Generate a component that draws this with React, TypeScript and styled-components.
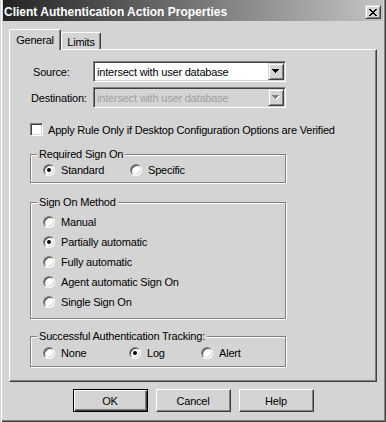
import React from "react";
import styled, { createGlobalStyle } from "styled-components";

const FACE = "#d4d4d4";

const Global = createGlobalStyle`
  html, body { margin: 0; padding: 0; background: ${FACE}; }
  body { font-family: "Liberation Sans", Arial, sans-serif; font-size: 11px; letter-spacing: -0.2px; color: #000; }
  * { box-sizing: border-box; }
`;

const Window = styled.div`
  width: 386px;
  height: 422px;
  background: ${FACE};
  padding: 0 3px 3px 3px;
  display: flex;
  flex-direction: column;
  box-shadow: inset 1px 0 0 ${FACE}, inset 2px 0 0 #fff, inset -1px -1px 0 #404040,
    inset -2px -2px 0 #808080;
`;

const TitleBar = styled.div`
  height: 21px;
  display: flex;
  justify-content: space-between;
  padding: 0 2px 0 1px;
  background: linear-gradient(to right, #242424, #c4c4c4);
`;

const TitleText = styled.span`
  align-self: center;
  padding-top: 2px;
  color: #fff;
  font-weight: bold;
  font-size: 12px;
  letter-spacing: 0;
  white-space: nowrap;
`;

const CloseButton = styled.div`
  align-self: flex-end;
  margin-bottom: 2px;
  width: 16px;
  height: 14px;
  display: flex;
  align-items: center;
  justify-content: center;
  background: ${FACE};
  border: 1px solid;
  border-color: ${FACE} #404040 #404040 ${FACE};
  box-shadow: inset 1px 1px 0 #fff, inset -1px -1px 0 #808080;
`;

const Body = styled.div`
  padding: 8px 6px 0 6px;
  display: flex;
  flex-direction: column;
`;

const TabRow = styled.div`
  display: flex;
  align-items: flex-end;
  height: 21px;
  margin-bottom: -1px;
  position: relative;
  z-index: 2;
`;

const Tab = styled.div<{ $active?: boolean; $w: number }>`
  width: ${(p) => p.$w}px;
  height: ${(p) => (p.$active ? 21 : 17)}px;
  margin-bottom: ${(p) => (p.$active ? 0 : 1)}px;
  display: flex;
  align-items: center;
  justify-content: center;
  background: ${FACE};
  border-top: 1px solid #fff;
  border-left: 1px solid #fff;
  border-right: 1px solid #404040;
  box-shadow: inset -1px 0 0 #808080;
  border-radius: 2px 2px 0 0;
  padding-top: ${(p) => (p.$active ? 0 : 1)}px;
`;

const Panel = styled.div`
  height: 333px;
  border-top: 1px solid #fff;
  border-left: 1px solid #fff;
  border-right: 1px solid #404040;
  border-bottom: 1px solid #404040;
  box-shadow: inset -1px -1px 0 #808080;
  padding: 11px 0 0 20px;
  display: flex;
  flex-direction: column;
`;

const FieldRow = styled.div<{ $mt?: number }>`
  display: flex;
  align-items: center;
  height: 21px;
  margin-top: ${(p) => p.$mt ?? 0}px;
`;

const FieldLabel = styled.span<{ $indent: number }>`
  width: 63px;
  padding-left: ${(p) => p.$indent}px;
  white-space: nowrap;
`;

const Combo = styled.div<{ $disabled?: boolean }>`
  width: 193px;
  height: 21px;
  display: flex;
  align-items: center;
  background: ${(p) => (p.$disabled ? FACE : "#fff")};
  border: 1px solid;
  border-color: #808080 #fff #fff #808080;
  box-shadow: inset 1px 1px 0 #404040, inset -1px -1px 0 ${FACE};
  padding: 1px;
`;

const ComboText = styled.span<{ $disabled?: boolean }>`
  flex: 1;
  padding-left: 2px;
  color: ${(p) => (p.$disabled ? "#a0a0a0" : "#000")};
  white-space: nowrap;
  overflow: hidden;
`;

const ArrowButton = styled.div`
  width: 16px;
  height: 17px;
  display: flex;
  align-items: center;
  justify-content: center;
  background: ${FACE};
  border: 1px solid;
  border-color: ${FACE} #404040 #404040 ${FACE};
  box-shadow: inset 1px 1px 0 #fff, inset -1px -1px 0 #808080;
`;

const CheckRow = styled.label`
  display: flex;
  align-items: center;
  gap: 5px;
  height: 13px;
  margin-top: 15px;
  white-space: nowrap;
`;

const CheckBox = styled.span`
  width: 13px;
  height: 13px;
  flex: none;
  background: #fff;
  border: 1px solid;
  border-color: #808080 #fff #fff #808080;
  box-shadow: inset 1px 1px 0 #404040, inset -1px -1px 0 ${FACE};
`;

const Group = styled.div<{ $mt: number; $pt: number; $pb: number }>`
  position: relative;
  width: 256px;
  margin-top: ${(p) => p.$mt}px;
  padding: ${(p) => p.$pt}px 0 ${(p) => p.$pb}px 12px;
  border: 1px solid #808080;
  box-shadow: inset 1px 1px 0 #fff, 1px 1px 0 #fff;
  display: flex;
  flex-direction: column;
`;

const Legend = styled.span`
  position: absolute;
  top: -7px;
  left: 6px;
  padding: 0 2px;
  line-height: 13px;
  background: ${FACE};
  white-space: nowrap;
`;

const OptionRow = styled.div`
  display: flex;
  height: 20px;
  align-items: center;
`;

const Option = styled.label<{ $w?: number }>`
  display: flex;
  align-items: center;
  gap: 6px;
  width: ${(p) => (p.$w ? `${p.$w}px` : "auto")};
  white-space: nowrap;
`;

const Radio = styled.span<{ $checked?: boolean }>`
  width: 12px;
  height: 12px;
  flex: none;
  border-radius: 50%;
  background: #fff;
  border: 1px solid;
  border-color: #808080 #fff #fff #808080;
  box-shadow: inset 1px 1px 0 #404040, inset -1px -1px 0 ${FACE};
  display: flex;
  align-items: center;
  justify-content: center;
  &::after {
    content: "";
    display: ${(p) => (p.$checked ? "block" : "none")};
    width: 4px;
    height: 4px;
    border-radius: 50%;
    background: #000;
  }
`;

const ButtonBar = styled.div`
  display: flex;
  justify-content: center;
  gap: 8px;
  margin-top: 7px;
`;

const PushButton = styled.button<{ $default?: boolean }>`
  width: 75px;
  height: 23px;
  padding: 0;
  font-family: "Liberation Sans", Arial, sans-serif;
  font-size: 11px;
  letter-spacing: -0.2px;
  color: #000;
  background: ${FACE};
  border: 1px solid;
  border-color: ${(p) => (p.$default ? "#000" : "#fff #404040 #404040 #fff")};
  box-shadow: ${(p) =>
    p.$default
      ? "inset 1px 1px 0 #fff, inset -1px -1px 0 #404040, inset -2px -2px 0 #808080"
      : "inset -1px -1px 0 #808080"};
`;

const Arrow = ({ disabled }: { disabled?: boolean }) => (
  <svg width="8" height="5" viewBox="0 0 8 5">
    {disabled && (
      <path d="M1 1h7v1H1zM2 2h5v1H2zM3 3h3v1H3zM4 4h1v1H4z" fill="#fff" />
    )}
    <path
      d="M0 0h7v1H0zM1 1h5v1H1zM2 2h3v1H2zM3 3h1v1H3z"
      fill={disabled ? "#808080" : "#000"}
    />
  </svg>
);

const CloseGlyph = () => (
  <svg width="8" height="7" viewBox="0 0 8 7">
    <path
      d="M0 0h2v1H0zM6 0h2v1H6zM1 1h2v1H1zM5 1h2v1H5zM2 2h4v1H2zM3 3h2v1H3zM2 4h4v1H2zM1 5h2v1H1zM5 5h2v1H5zM0 6h2v1H0zM6 6h2v1H6z"
      fill="#000"
    />
  </svg>
);

const methods: [string, boolean][] = [
  ["Manual", false],
  ["Partially automatic", true],
  ["Fully automatic", false],
  ["Agent automatic Sign On", false],
  ["Single Sign On", false],
];

export default function App() {
  return (
    <>
      <Global />
      <Window>
        <TitleBar>
          <TitleText>Client Authentication Action Properties</TitleText>
          <CloseButton>
            <CloseGlyph />
          </CloseButton>
        </TitleBar>
        <Body>
          <TabRow>
            <Tab $active $w={52}>General</Tab>
            <Tab $w={40}>Limits</Tab>
          </TabRow>
          <Panel>
            <FieldRow>
              <FieldLabel $indent={3}>Source:</FieldLabel>
              <Combo>
                <ComboText>intersect with user database</ComboText>
                <ArrowButton>
                  <Arrow />
                </ArrowButton>
              </Combo>
            </FieldRow>
            <FieldRow $mt={5}>
              <FieldLabel $indent={1}>Destination:</FieldLabel>
              <Combo $disabled>
                <ComboText $disabled>intersect with user database</ComboText>
                <ArrowButton>
                  <Arrow disabled />
                </ArrowButton>
              </Combo>
            </FieldRow>
            <CheckRow>
              <CheckBox />
              Apply Rule Only if Desktop Configuration Options are Verified
            </CheckRow>
            <Group $mt={18} $pt={5} $pb={2}>
              <Legend>Required Sign On</Legend>
              <OptionRow>
                <Option $w={87}>
                  <Radio $checked />
                  Standard
                </Option>
                <Option>
                  <Radio />
                  Specific
                </Option>
              </OptionRow>
            </Group>
            <Group $mt={19} $pt={9} $pb={6}>
              <Legend>Sign On Method</Legend>
              {methods.map(([label, checked]) => (
                <OptionRow key={label}>
                  <Option>
                    <Radio $checked={checked} />
                    {label}
                  </Option>
                </OptionRow>
              ))}
            </Group>
            <Group $mt={17} $pt={6} $pb={3}>
              <Legend>Successful Authentication Tracking:</Legend>
              <OptionRow>
                <Option $w={86}>
                  <Radio />
                  None
                </Option>
                <Option $w={72}>
                  <Radio $checked />
                  Log
                </Option>
                <Option>
                  <Radio />
                  Alert
                </Option>
              </OptionRow>
            </Group>
          </Panel>
          <ButtonBar>
            <PushButton $default>OK</PushButton>
            <PushButton>Cancel</PushButton>
            <PushButton>Help</PushButton>
          </ButtonBar>
        </Body>
      </Window>
    </>
  );
}
